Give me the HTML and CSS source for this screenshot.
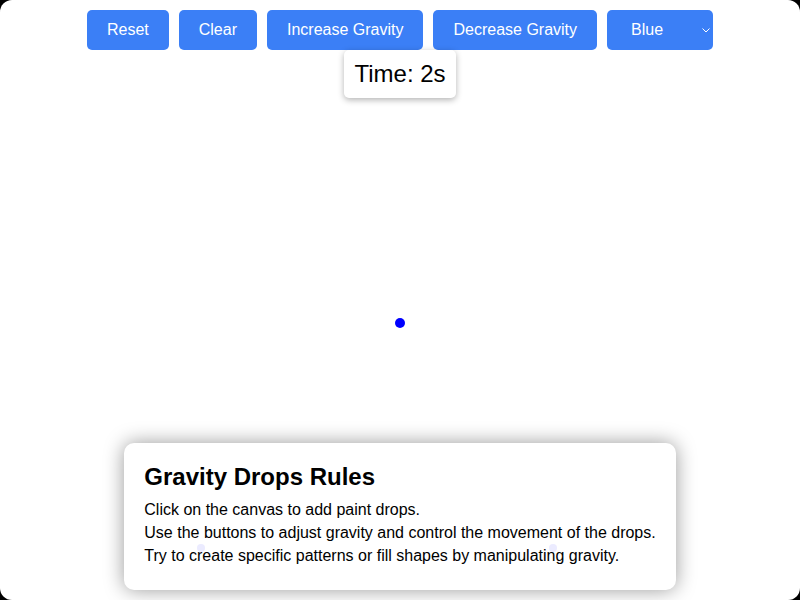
FILE: index.html
```html
<!DOCTYPE html>
<html lang="en">
<head>
<meta charset="utf-8">
<title>Gravity Drops</title>
<link rel="stylesheet" href="styles.css">
</head>
<body>
<div class="screen">
  <div class="canvas">
    <span class="drop" style="left:395px;top:318px"></span>
    <span class="drop faint" style="left:197px;top:544px"></span>
    <span class="drop faint" style="left:549px;top:544px"></span>
  </div>
  <div class="controls">
    <button class="btn">Reset</button>
    <button class="btn">Clear</button>
    <button class="btn">Increase Gravity</button>
    <button class="btn">Decrease Gravity</button>
    <div class="select-wrap">
      <select class="btn select">
        <option>Blue</option>
        <option>Red</option>
        <option>Green</option>
      </select>
      <svg class="chevron" width="8" height="5" viewBox="0 0 8 5"><path d="M0.5 0.5 L4 4 L7.5 0.5" fill="none" stroke="#fff" stroke-width="1"/></svg>
    </div>
  </div>
  <div class="timer">Time: 2s</div>
  <div class="rules">
    <h2>Gravity Drops Rules</h2>
    <p>Click on the canvas to add paint drops.</p>
    <p>Use the buttons to adjust gravity and control the movement of the drops.</p>
    <p>Try to create specific patterns or fill shapes by manipulating gravity.</p>
  </div>
</div>
</body>
</html>
```
FILE: styles.css
```css
html {
  background: #000;
}
body {
  margin: 0;
  font-family: "Liberation Sans", Arial, sans-serif;
}
.screen {
  position: relative;
  height: 600px;
  background: #fff;
  border-radius: 12px;
  overflow: hidden;
  display: flex;
  flex-direction: column;
  align-items: center;
}
.canvas {
  position: absolute;
  inset: 0;
  pointer-events: none;
}
.drop {
  position: absolute;
  width: 10px;
  height: 10px;
  border-radius: 50%;
  background: #0000ff;
}
.drop.faint {
  width: 8px;
  height: 8px;
  background: rgba(60, 60, 255, 0.1);
  z-index: 2;
}
.controls {
  position: relative;
  display: flex;
  gap: 10px;
  padding-top: 10px;
}
.btn {
  font-family: "Liberation Sans", Arial, sans-serif;
  font-size: 16px;
  line-height: 20px;
  color: #fff;
  background: #3b7ff6;
  border: none;
  border-radius: 5px;
  padding: 10px 20px;
  margin: 0;
  cursor: pointer;
}
.select-wrap {
  position: relative;
  display: flex;
}
.select {
  appearance: none;
  -webkit-appearance: none;
  width: 106px;
  padding: 10px 20px 10px 24px;
  height: 40px;
  text-align: left;
}
.chevron {
  position: absolute;
  right: 3px;
  top: 18px;
}
.timer {
  position: relative;
  margin-top: 0;
  background: #fff;
  padding: 10px;
  font-size: 24px;
  line-height: 28px;
  border-radius: 5px;
  box-shadow: 0 2px 6px rgba(0, 0, 0, 0.3);
}
.rules {
  position: relative;
  margin-top: auto;
  margin-bottom: 10px;
  width: fit-content;
  background: #fff;
  padding: 20px;
  border-radius: 10px;
  box-shadow: 0 0 20px rgba(0, 0, 0, 0.4);
}
.rules h2 {
  margin: 0 0 10px;
  font-size: 24px;
  line-height: 28px;
  font-weight: bold;
}
.rules p {
  margin: 5px 0;
  font-size: 16px;
  line-height: 18px;
}
```
